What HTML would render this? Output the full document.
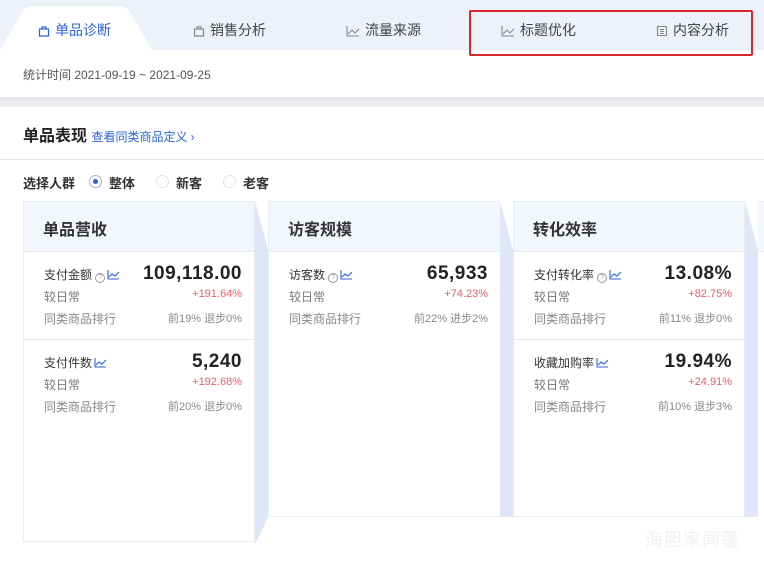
<!DOCTYPE html><html><head><meta charset="utf-8"><style>
*{margin:0;padding:0;box-sizing:border-box}
body{width:764px;height:561px;overflow:hidden;background:#fff;font-family:"Liberation Sans","Noto Sans CJK SC",sans-serif;position:relative;color:#333}
.a{position:absolute;white-space:nowrap}
.tab{position:absolute;top:20px;font-size:14px;color:#444;line-height:20px}
.tab svg{vertical-align:-2px;margin-right:5px}
.card{position:absolute;top:201px;width:232px;background:#fff;border:1px solid #e8ecf3}
.ch{height:50px;background:#f3f6fc;border-bottom:1px solid #e6eaf2;font-size:16px;font-weight:bold;color:#333;padding:14px 0 0 19px}
.m{position:relative;height:88px;border-bottom:1px solid #e6eaf2}
.m .l{position:absolute;left:20px;top:14px;font-size:12px;color:#333}
.m .v{position:absolute;right:12px;top:11px;font-size:19px;font-weight:bold;color:#222;letter-spacing:.5px}
.m .g{position:absolute;left:20px;top:36px;font-size:12px;color:#777}
.m .p{position:absolute;right:12px;top:36px;font-size:11px;color:#e4606d}
.m .r{position:absolute;left:20px;top:58px;font-size:12px;color:#888}
.m .rv{position:absolute;right:12px;top:58px;font-size:11px;color:#888}
.q{display:inline-block;width:10px;height:10px;border:1px solid #999;border-radius:50%;font-size:7px;line-height:8px;text-align:center;color:#999;vertical-align:0;margin:0 2px 0 3px}
.ic{vertical-align:-1px}
</style></head><body>
<div class="a" style="left:0;top:0;width:764px;height:50px;background:#edf1f9"></div>
<svg class="a" style="left:0;top:0" width="160" height="51"><path d="M0 50 L22 12 Q26 6 34 6 L118 6 Q126 6 130 12 L152 50 Z" fill="#fff"/></svg>
<div class="tab" style="left:38px;color:#2d63d8"><svg width="12" height="12"><path d="M1.5 4h9v7h-9z M4 4V2h4v2" fill="none" stroke="#2d63d8" stroke-width="1.2"/></svg>单品诊断</div>
<div class="tab" style="left:193px"><svg width="12" height="12"><path d="M1.5 4h9v7h-9z M4 4V2h4v2" fill="none" stroke="#888" stroke-width="1.2"/></svg>销售分析</div>
<div class="tab" style="left:346px"><svg width="14" height="12"><path d="M1 1v10h12 M2 9l4-4 3 3 4-4" fill="none" stroke="#888" stroke-width="1.1"/></svg>流量来源</div>
<div class="tab" style="left:501px"><svg width="14" height="12"><path d="M1 1v10h12 M2 9l4-4 3 3 4-4" fill="none" stroke="#888" stroke-width="1.1"/></svg>标题优化</div>
<div class="tab" style="left:656px"><svg width="12" height="12"><path d="M1.5 1.5h9v9h-9z M4 4.5h4 M4 6.5h4 M4 8.5h4" fill="none" stroke="#888" stroke-width="1.1"/></svg>内容分析</div>
<div class="a" style="left:469px;top:10px;width:284px;height:46px;border:2px solid #d8262c;border-radius:2px"></div>
<div class="a" style="left:23px;top:66px;font-size:12px;color:#555">统计时间 2021-09-19 ~ 2021-09-25</div>
<div class="a" style="left:0;top:97px;width:764px;height:10px;background:linear-gradient(#e4e6ea,#f0f1f3)"></div>
<div class="a" style="left:23px;top:122px;font-size:16px;font-weight:bold;color:#222">单品表现 <span style="font-size:12px;font-weight:normal;color:#2d63d8">查看同类商品定义 ›</span></div>
<div class="a" style="left:0;top:159px;width:764px;height:1px;background:#e8e8ec"></div>
<div class="a" style="left:23px;top:173px;font-size:13px;font-weight:bold;color:#333">选择人群</div>
<div class="a" style="left:89px;top:175px;width:13px;height:13px;border:1px solid #9fb2dc;border-radius:50%"><div style="width:5px;height:5px;background:#2d63d8;border-radius:50%;margin:3px"></div></div>
<div class="a" style="left:109px;top:173px;font-size:13px;font-weight:bold">整体</div>
<div class="a" style="left:156px;top:175px;width:13px;height:13px;border:1px solid #e0e0e0;border-radius:50%"></div>
<div class="a" style="left:176px;top:173px;font-size:13px;font-weight:bold">新客</div>
<div class="a" style="left:223px;top:175px;width:13px;height:13px;border:1px solid #e0e0e0;border-radius:50%"></div>
<div class="a" style="left:243px;top:173px;font-size:13px;font-weight:bold">老客</div>
<svg class="a" style="left:0;top:195px" width="764" height="360"><g fill="#dfe6fa"><path d="M255 6 L268 55 L268 322 L255 350 Z"/><path d="M500 6 L513 55 L513 322 L500 322 Z"/><path d="M745 6 L758 55 L758 322 L745 322 Z"/></g></svg>
<div class="card" style="left:23px;height:341px"><div class="ch">单品营收</div>
<div class="m"><span class="l">支付金额<span class="q">?</span><svg class="ic" width="13" height="11"><path d="M1 1v9h11 M2 8l3-3 3 2 4-4" fill="none" stroke="#2d63d8" stroke-width="1.1"/></svg></span><span class="v">109,118.00</span><span class="g">较日常</span><span class="p">+191.64%</span><span class="r">同类商品排行</span><span class="rv">前19% 退步0%</span></div>
<div class="m" style="border:0"><span class="l">支付件数<svg class="ic" style="margin-left:2px" width="13" height="11"><path d="M1 1v9h11 M2 8l3-3 3 2 4-4" fill="none" stroke="#2d63d8" stroke-width="1.1"/></svg></span><span class="v">5,240</span><span class="g">较日常</span><span class="p">+192.68%</span><span class="r">同类商品排行</span><span class="rv">前20% 退步0%</span></div></div>
<div class="card" style="left:268px;height:316px;border-right:0"><div class="ch">访客规模</div>
<div class="m" style="border:0"><span class="l">访客数<span class="q">?</span><svg class="ic" width="13" height="11"><path d="M1 1v9h11 M2 8l3-3 3 2 4-4" fill="none" stroke="#2d63d8" stroke-width="1.1"/></svg></span><span class="v">65,933</span><span class="g">较日常</span><span class="p">+74.23%</span><span class="r">同类商品排行</span><span class="rv">前22% 进步2%</span></div></div>
<div class="card" style="left:513px;height:316px"><div class="ch">转化效率</div>
<div class="m"><span class="l">支付转化率<span class="q">?</span><svg class="ic" width="13" height="11"><path d="M1 1v9h11 M2 8l3-3 3 2 4-4" fill="none" stroke="#2d63d8" stroke-width="1.1"/></svg></span><span class="v">13.08%</span><span class="g">较日常</span><span class="p">+82.75%</span><span class="r">同类商品排行</span><span class="rv">前11% 退步0%</span></div>
<div class="m" style="border:0"><span class="l">收藏加购率<svg class="ic" style="margin-left:2px" width="13" height="11"><path d="M1 1v9h11 M2 8l3-3 3 2 4-4" fill="none" stroke="#2d63d8" stroke-width="1.1"/></svg></span><span class="v">19.94%</span><span class="g">较日常</span><span class="p">+24.91%</span><span class="r">同类商品排行</span><span class="rv">前10% 退步3%</span></div></div>
<div class="a" style="left:758px;top:201px;width:6px;height:316px;background:#fff;border-top:1px solid #e8ecf3"><div style="height:50px;background:#f3f6fc;border-bottom:1px solid #e6eaf2"></div></div>
<div class="a" style="left:645px;top:526px;font-size:18px;color:#eef0f4;letter-spacing:1px">海胆家闻蓬</div>
</body></html>
